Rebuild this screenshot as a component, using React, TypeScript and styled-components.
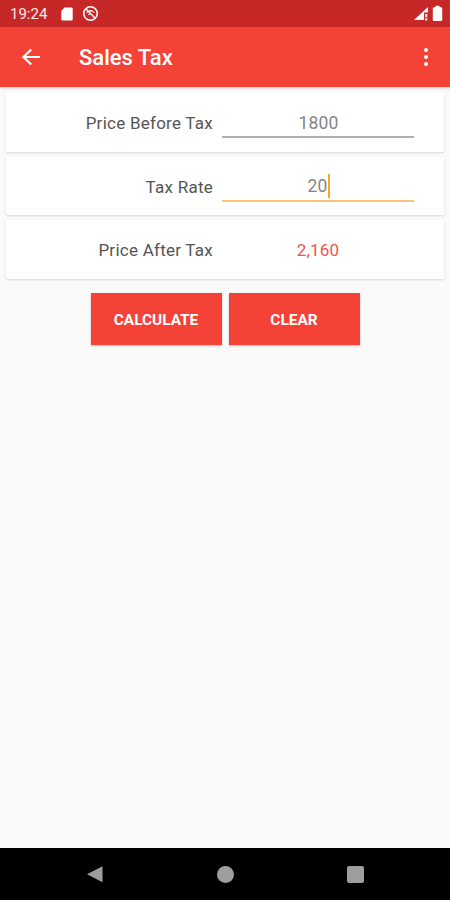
import styled, { createGlobalStyle } from "styled-components";

const GlobalStyle = createGlobalStyle`
  html, body {
    margin: 0;
    padding: 0;
    background: #fafafa;
    font-family: Roboto, "Liberation Sans", sans-serif;
  }
`;

function SimIcon() {
  return (
    <svg width="14" height="16" viewBox="0 0 14 16">
      <path d="M4.5 1.5H11.5a1.2 1.2 0 0 1 1.2 1.2V13.3a1.2 1.2 0 0 1-1.2 1.2H2.5a1.2 1.2 0 0 1-1.2-1.2V5z" fill="#fff" />
    </svg>
  );
}

function NoDisturbIcon() {
  return (
    <svg width="17" height="17" viewBox="0 0 17 17" fill="none" stroke="#fff">
      <circle cx="8.5" cy="8.5" r="6.8" strokeWidth="1.6" />
      <path d="M3.8 3.8 13.2 13.2" strokeWidth="1.4" />
      <path d="M4.6 7.6a5 5 0 0 1 5.2-1.4M6.4 9.8a2.6 2.6 0 0 1 2-.8M8.6 5.2a6 6 0 0 1 3.6 2.6" strokeWidth="1.1" />
    </svg>
  );
}

function SignalIcon() {
  return (
    <svg width="16" height="16" viewBox="0 0 16 16">
      <path d="M15 1V6.5H11V14H1z" fill="#fff" />
      <path d="M12 8H14.4V11.2H12zM12 12.2H14.4V14.4H12z" fill="#fff" opacity="0.85" />
    </svg>
  );
}

function BatteryIcon() {
  return (
    <svg width="11" height="17" viewBox="0 0 11 17">
      <path d="M3.5 0.8H7.5V2.2H9.2a1 1 0 0 1 1 1V15a1 1 0 0 1-1 1H1.8a1 1 0 0 1-1-1V3.2a1 1 0 0 1 1-1H3.5z" fill="#fff" />
    </svg>
  );
}

function BackIcon() {
  return (
    <svg width="20" height="20" viewBox="0 0 20 20" fill="none" stroke="#fff" strokeWidth="2.2">
      <path d="M19 10H2.5M10.2 2.5 2.5 10l7.7 7.5" />
    </svg>
  );
}

function App() {
  return (
    <Screen>
      <GlobalStyle />
      <StatusBar>
        <StatusGroup>
          <Clock>19:24</Clock>
          <SimIcon />
          <NoDisturbIcon />
        </StatusGroup>
        <StatusGroup $gap={3}>
          <SignalIcon />
          <BatteryIcon />
        </StatusGroup>
      </StatusBar>
      <AppBar>
        <BackSlot>
          <BackIcon />
        </BackSlot>
        <Title>Sales Tax</Title>
        <MenuDots>
          <Dot />
          <Dot />
          <Dot />
        </MenuDots>
      </AppBar>
      <Content>
        <Card>
          <Label>Price Before Tax</Label>
          <Field>
            <FieldText>1800</FieldText>
          </Field>
        </Card>
        <Card>
          <Label>Tax Rate</Label>
          <Field $focused>
            <FieldText>
              20
              <Caret />
            </FieldText>
          </Field>
        </Card>
        <Card>
          <Label>Price After Tax</Label>
          <Result>2,160</Result>
        </Card>
        <Buttons>
          <ActionButton>CALCULATE</ActionButton>
          <ActionButton>CLEAR</ActionButton>
        </Buttons>
      </Content>
      <NavBar>
        <svg width="18" height="18" viewBox="0 0 18 18">
          <path d="M16.5 1.2V17.2L1 9.2z" fill="#9e9e9e" />
        </svg>
        <HomeButton />
        <RecentButton />
      </NavBar>
    </Screen>
  );
}

const Screen = styled.div`
  display: flex;
  flex-direction: column;
  width: 450px;
  height: 900px;
  overflow: hidden;
  background: #fafafa;
`;

const StatusBar = styled.div`
  display: flex;
  flex: none;
  align-items: center;
  justify-content: space-between;
  height: 27px;
  padding: 0 7px 0 10px;
  background: #c62828;
`;

const StatusGroup = styled.div<{ $gap?: number }>`
  display: flex;
  align-items: center;
  gap: ${(p) => p.$gap ?? 8}px;
`;

const Clock = styled.span`
  margin-right: 5px;
  color: #fbe9e7;
  font-size: 15px;
`;

const AppBar = styled.header`
  display: flex;
  flex: none;
  align-items: center;
  height: 60px;
  background: #f44336;
  box-shadow: 0 1px 3px rgba(0, 0, 0, 0.2);
`;

const BackSlot = styled.div`
  display: flex;
  justify-content: center;
  width: 62px;
  box-sizing: border-box;
`;

const Title = styled.h1`
  flex: 1;
  margin: 0 0 0 17px;
  color: #fff;
  font-size: 22px;
  font-weight: 500;
`;

const MenuDots = styled.div`
  display: flex;
  flex-direction: column;
  gap: 2.5px;
  margin-right: 22px;
`;

const Dot = styled.span`
  width: 4.5px;
  height: 4.5px;
  border-radius: 50%;
  background: #fff;
`;

const Content = styled.main`
  display: flex;
  flex: 1;
  flex-direction: column;
  gap: 5px;
  padding: 6px 6px 0;
`;

const Card = styled.section`
  display: grid;
  grid-template-columns: 207px 192px;
  column-gap: 9px;
  align-items: center;
  height: 58.5px;
  background: #fff;
  box-shadow: 0 1px 2px rgba(0, 0, 0, 0.14);
`;

const Label = styled.span`
  padding-top: 2px;
  color: #555;
  font-size: 17px;
  letter-spacing: 0.25px;
  text-align: right;
`;

const Field = styled.div<{ $focused?: boolean }>`
  display: flex;
  justify-content: center;
  height: 29px;
  margin-top: 1px;
  border-bottom: 2px solid ${(p) => (p.$focused ? "#ffc078" : "#b0b0b0")};
`;

const FieldText = styled.span`
  display: flex;
  align-items: center;
  height: 29px;
  padding: 1px 0 0 1px;
  color: #858585;
  font-size: 17.5px;
  letter-spacing: 0.2px;
`;

const Caret = styled.span`
  width: 2px;
  height: 24px;
  background: #f9a825;
`;

const Result = styled.span`
  padding-top: 2px;
  color: #ef5350;
  font-size: 17px;
  letter-spacing: 0.2px;
  text-align: center;
`;

const Buttons = styled.div`
  display: flex;
  justify-content: center;
  gap: 7px;
  margin-top: 9px;
`;

const ActionButton = styled.button`
  width: 131px;
  height: 52px;
  padding: 3px 0 0;
  border: 0;
  background: #f44336;
  color: #fff;
  font-family: inherit;
  font-size: 15.4px;
  font-weight: 700;
  box-shadow: 0 1px 2px rgba(0, 0, 0, 0.25);
`;

const NavBar = styled.nav`
  display: flex;
  flex: none;
  align-items: center;
  justify-content: space-between;
  height: 52px;
  padding: 0 86px;
  background: #000;
`;

const HomeButton = styled.span`
  width: 17px;
  height: 17px;
  border-radius: 50%;
  background: #9e9e9e;
`;

const RecentButton = styled.span`
  width: 17px;
  height: 17px;
  border-radius: 2px;
  background: #9e9e9e;
`;

export default App;
